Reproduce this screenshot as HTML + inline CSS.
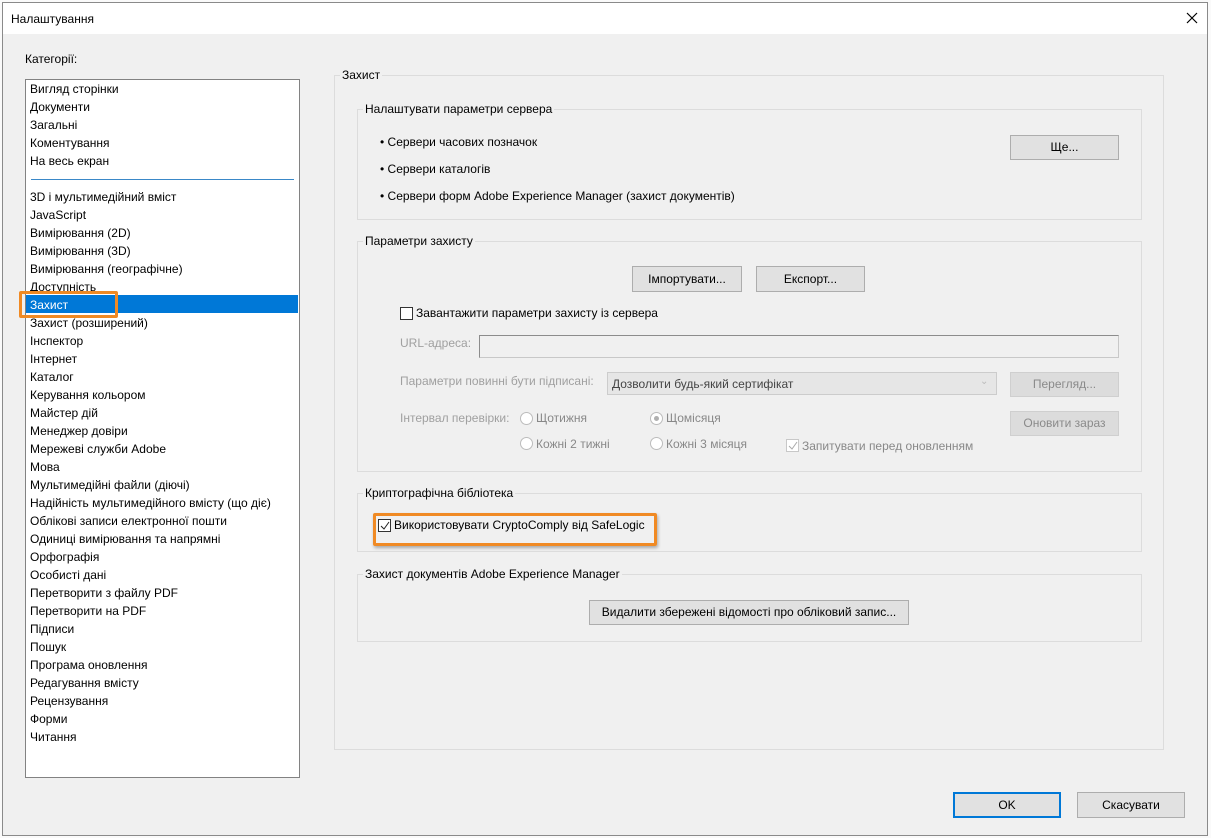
<!DOCTYPE html>
<html><head><meta charset="utf-8"><style>
*{box-sizing:border-box;margin:0;padding:0}
body{width:1211px;height:838px;background:#fafafa;font-family:"Liberation Sans",sans-serif;font-size:12px;color:#000;position:relative;overflow:hidden}
.a{position:absolute;white-space:nowrap}
.dlg{position:absolute;left:2px;top:2px;width:1206px;height:834px;background:#f0f0f0;border:1px solid #8a8a8a}
.title{position:absolute;left:0;top:0;width:100%;height:31px;background:#fff}
.list{position:absolute;left:25px;top:79px;width:275px;height:699px;background:#fff;border:1px solid #828282}
.it{position:absolute;left:4px;height:18px;line-height:18px}
.grp{position:absolute;border:1px solid #dcdcdc}
.lbl{position:absolute;background:#f0f0f0;padding:0 2px;line-height:14px}
.btn{position:absolute;background:#e1e1e1;border:1px solid #adadad;text-align:center;font-size:12px}
.dis{color:#a0a0a0}
.dbtn{position:absolute;background:#dcdcdc;border:1px solid #cfcfcf;color:#8a8a8a;text-align:center}
.cb{position:absolute;width:13px;height:13px;border:1px solid #333;background:#fff}
.rd{position:absolute;width:13px;height:13px;border:1px solid #bcbcbc;border-radius:50%;background:#fff}
.orange{position:absolute;border:3px solid #f08a24;border-radius:2px}
</style></head><body>
<div class="dlg">
<div class="title"><span class="a" style="left:8px;top:9px">Налаштування</span>
<svg class="a" style="left:1183px;top:9px" width="12" height="12"><path d="M1 1L11 11M11 1L1 11" stroke="#000" stroke-width="1.2"/></svg></div>
</div>
<span class="a" style="left:25px;top:52px">Категорії:</span>
<div class="list">
<div class="a" style="left:0;top:215px;width:272px;height:18px;background:#0078d7"></div>
<div class="a" style="left:5px;top:99px;width:263px;height:1px;background:#3a88c8"></div>
<div class="it" style="top:0">Вигляд сторінки</div>
<div class="it" style="top:18px">Документи</div>
<div class="it" style="top:36px">Загальні</div>
<div class="it" style="top:54px">Коментування</div>
<div class="it" style="top:72px">На весь екран</div>
<div class="it" style="top:108px">3D і мультимедійний вміст</div>
<div class="it" style="top:126px">JavaScript</div>
<div class="it" style="top:144px">Вимірювання (2D)</div>
<div class="it" style="top:162px">Вимірювання (3D)</div>
<div class="it" style="top:180px">Вимірювання (географічне)</div>
<div class="it" style="top:198px">Доступність</div>
<div class="it" style="top:216px;color:#fff">Захист</div>
<div class="it" style="top:234px">Захист (розширений)</div>
<div class="it" style="top:252px">Інспектор</div>
<div class="it" style="top:270px">Інтернет</div>
<div class="it" style="top:288px">Каталог</div>
<div class="it" style="top:306px">Керування кольором</div>
<div class="it" style="top:324px">Майстер дій</div>
<div class="it" style="top:342px">Менеджер довіри</div>
<div class="it" style="top:360px">Мережеві служби Adobe</div>
<div class="it" style="top:378px">Мова</div>
<div class="it" style="top:396px">Мультимедійні файли (діючі)</div>
<div class="it" style="top:414px">Надійність мультимедійного вмісту (що діє)</div>
<div class="it" style="top:432px">Облікові записи електронної пошти</div>
<div class="it" style="top:450px">Одиниці вимірювання та напрямні</div>
<div class="it" style="top:468px">Орфографія</div>
<div class="it" style="top:486px">Особисті дані</div>
<div class="it" style="top:504px">Перетворити з файлу PDF</div>
<div class="it" style="top:522px">Перетворити на PDF</div>
<div class="it" style="top:540px">Підписи</div>
<div class="it" style="top:558px">Пошук</div>
<div class="it" style="top:576px">Програма оновлення</div>
<div class="it" style="top:594px">Редагування вмісту</div>
<div class="it" style="top:612px">Рецензування</div>
<div class="it" style="top:630px">Форми</div>
<div class="it" style="top:648px">Читання</div>
</div>
<div class="orange" style="left:19px;top:291px;width:99px;height:27px"></div>

<div class="grp" style="left:334px;top:75px;width:830px;height:675px"></div>
<span class="lbl" style="left:340px;top:68px">Захист</span>

<div class="grp" style="left:357px;top:109px;width:785px;height:111px"></div>
<span class="lbl" style="left:363px;top:102px">Налаштувати параметри сервера</span>
<span class="a" style="left:380px;top:135px">• Сервери часових позначок</span>
<span class="a" style="left:380px;top:162px">• Сервери каталогів</span>
<span class="a" style="left:380px;top:189px">• Сервери форм Adobe Experience Manager (захист документів)</span>
<div class="btn" style="left:1010px;top:135px;width:109px;height:25px;line-height:23px">Ще...</div>

<div class="grp" style="left:357px;top:241px;width:785px;height:231px"></div>
<span class="lbl" style="left:363px;top:234px">Параметри захисту</span>
<div class="btn" style="left:632px;top:266px;width:110px;height:26px;line-height:24px">Імпортувати...</div>
<div class="btn" style="left:756px;top:266px;width:109px;height:26px;line-height:24px">Експорт...</div>
<div class="cb" style="left:400px;top:307px"></div>
<span class="a" style="left:416px;top:306px">Завантажити параметри захисту із сервера</span>
<span class="a dis" style="left:400px;top:336px">URL-адреса:</span>
<div class="a" style="left:479px;top:335px;width:640px;height:23px;border:1px solid #c8c8c8;border-top-color:#8c8c8c;border-left-color:#8c8c8c;background:#f0f0f0"></div>
<span class="a dis" style="left:400px;top:374px">Параметри повинні бути підписані:</span>
<div class="a" style="left:607px;top:372px;width:390px;height:23px;border:1px solid #cccccc;background:#e6e6e6"><span class="a" style="left:4px;top:4px;color:#444">Дозволити будь-який сертифікат</span><span class="a" style="left:372px;top:3px;color:#bbb;font-size:10px">⌄</span></div>
<div class="dbtn" style="left:1010px;top:372px;width:109px;height:25px;line-height:23px">Перегляд...</div>
<span class="a dis" style="left:400px;top:411px">Інтервал перевірки:</span>
<div class="rd" style="left:520px;top:412px"></div><span class="a dis" style="left:536px;top:411px;color:#888">Щотижня</span>
<div class="rd" style="left:650px;top:412px"><div class="a" style="left:3px;top:3px;width:5px;height:5px;border-radius:50%;background:#b0b0b0"></div></div><span class="a" style="left:666px;top:411px;color:#888">Щомісяця</span>
<div class="rd" style="left:520px;top:437px"></div><span class="a" style="left:536px;top:437px;color:#888">Кожні 2 тижні</span>
<div class="rd" style="left:650px;top:437px"></div><span class="a" style="left:666px;top:437px;color:#888">Кожні 3 місяця</span>
<div class="cb" style="left:786px;top:439px;border-color:#c8c8c8"><svg class="a" style="left:1px;top:1px" width="10" height="10"><path d="M1 5L4 8L9 1" stroke="#aaa" fill="none"/></svg></div>
<span class="a" style="left:802px;top:439px;color:#888">Запитувати перед оновленням</span>
<div class="dbtn" style="left:1010px;top:411px;width:109px;height:25px;line-height:23px">Оновити зараз</div>

<div class="grp" style="left:357px;top:493px;width:785px;height:59px"></div>
<span class="lbl" style="left:363px;top:486px">Криптографічна бібліотека</span>
<div class="cb" style="left:378px;top:519px"><svg class="a" style="left:1px;top:1px" width="10" height="10"><path d="M1 5L4 8L9 1" stroke="#222" fill="none"/></svg></div>
<span class="a" style="left:394px;top:518px">Використовувати CryptoComply від SafeLogic</span>
<div class="orange" style="left:373px;top:513px;width:284px;height:33px;box-shadow:1px 2px 3px rgba(0,0,0,.3)"></div>

<div class="grp" style="left:357px;top:574px;width:785px;height:68px"></div>
<span class="lbl" style="left:363px;top:567px">Захист документів Adobe Experience Manager</span>
<div class="btn" style="left:589px;top:600px;width:320px;height:25px;line-height:23px">Видалити збережені відомості про обліковий запис...</div>

<div class="btn" style="left:953px;top:792px;width:108px;height:26px;line-height:22px;border:2px solid #0078d7">OK</div>
<div class="btn" style="left:1077px;top:792px;width:108px;height:26px;line-height:24px">Скасувати</div>
</body></html>
